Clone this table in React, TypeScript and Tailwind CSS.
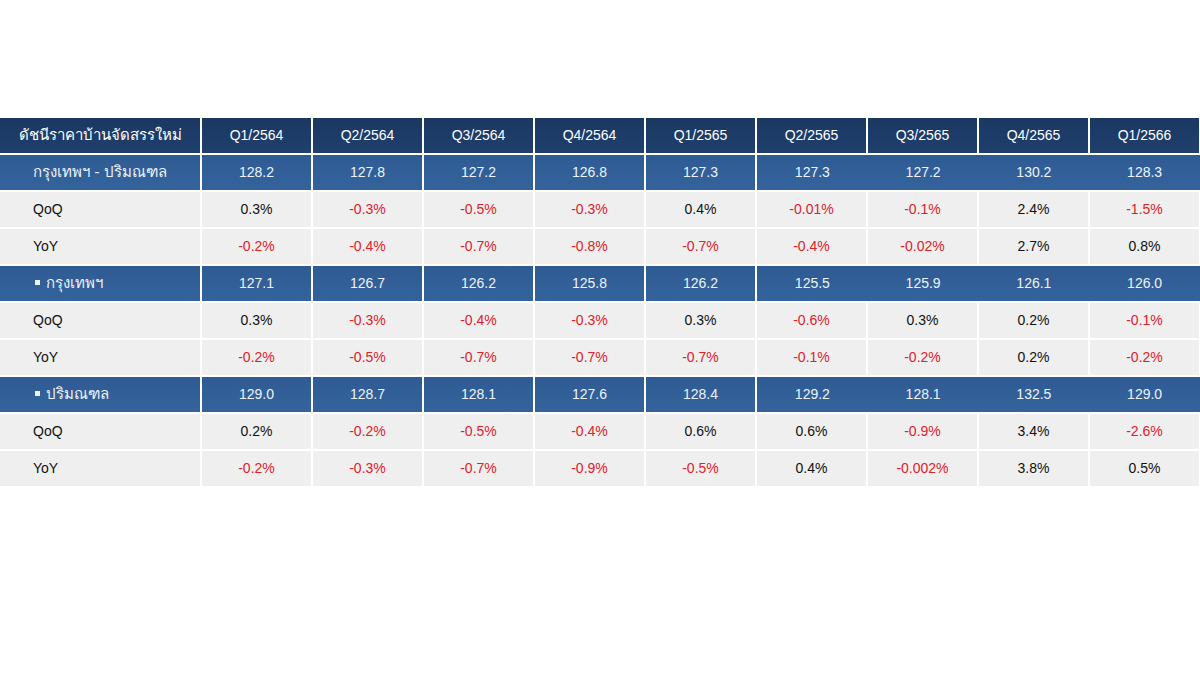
import React from "react"

type Row =
  | { kind: "head"; label: string; bullet?: boolean; values: string[] }
  | { kind: "sub"; label: string; values: string[] }

const QUARTERS = ["Q1/2564", "Q2/2564", "Q3/2564", "Q4/2564", "Q1/2565", "Q2/2565", "Q3/2565", "Q4/2565", "Q1/2566"]

const ROWS: Row[] = [
  { kind: "head", label: "กรุงเทพฯ - ปริมณฑล", values: ["128.2", "127.8", "127.2", "126.8", "127.3", "127.3", "127.2", "130.2", "128.3"] },
  { kind: "sub", label: "QoQ", values: ["0.3%", "-0.3%", "-0.5%", "-0.3%", "0.4%", "-0.01%", "-0.1%", "2.4%", "-1.5%"] },
  { kind: "sub", label: "YoY", values: ["-0.2%", "-0.4%", "-0.7%", "-0.8%", "-0.7%", "-0.4%", "-0.02%", "2.7%", "0.8%"] },
  { kind: "head", label: "กรุงเทพฯ", bullet: true, values: ["127.1", "126.7", "126.2", "125.8", "126.2", "125.5", "125.9", "126.1", "126.0"] },
  { kind: "sub", label: "QoQ", values: ["0.3%", "-0.3%", "-0.4%", "-0.3%", "0.3%", "-0.6%", "0.3%", "0.2%", "-0.1%"] },
  { kind: "sub", label: "YoY", values: ["-0.2%", "-0.5%", "-0.7%", "-0.7%", "-0.7%", "-0.1%", "-0.2%", "0.2%", "-0.2%"] },
  { kind: "head", label: "ปริมณฑล", bullet: true, values: ["129.0", "128.7", "128.1", "127.6", "128.4", "129.2", "128.1", "132.5", "129.0"] },
  { kind: "sub", label: "QoQ", values: ["0.2%", "-0.2%", "-0.5%", "-0.4%", "0.6%", "0.6%", "-0.9%", "3.4%", "-2.6%"] },
  { kind: "sub", label: "YoY", values: ["-0.2%", "-0.3%", "-0.7%", "-0.9%", "-0.5%", "0.4%", "-0.002%", "3.8%", "0.5%"] },
]

const GRID = "grid grid-cols-[200px_repeat(9,109px)] gap-x-[2px] h-[35px]"
const BLUE = "bg-gradient-to-b from-[#2f5b93] to-[#34639c]"

function HeadRow({ row }: { row: Extract<Row, { kind: "head" }> }) {
  return (
    <div className={GRID}>
      <div
        className={
          "flex items-center text-[15px] text-[#eef3f9] " + BLUE + " " +
          (row.bullet ? "pl-[35px]" : "justify-center")
        }
      >
        {row.bullet && <span className="mr-[6px] mb-[3px] inline-block size-[5px] bg-[#eef3f9]" />}
        {row.label}
      </div>
      {row.values.slice(0, 5).map((v, i) => (
        <div key={i} className={"flex items-center justify-center text-[14px] text-[#eef3f9] " + BLUE}>
          {v}
        </div>
      ))}
      {/* right block is one continuous band, no inner gaps */}
      <div className={"col-span-4 grid grid-cols-4 mr-[-1px] " + BLUE}>
        {row.values.slice(5).map((v, i) => (
          <div key={i} className="flex items-center justify-center text-[14px] text-[#eef3f9]">
            {v}
          </div>
        ))}
      </div>
    </div>
  )
}

function SubRow({ row }: { row: Row }) {
  return (
    <div className={GRID}>
      <div className="flex items-center bg-[#efefef] pl-[33px] text-[14px] text-[#111]">{row.label}</div>
      {row.values.map((v, i) => (
        <div
          key={i}
          className={
            "flex items-center justify-center bg-[#efefef] text-[14px] " +
            (v.startsWith("-") ? "text-[#e0212b]" : "text-[#111]")
          }
        >
          {v}
        </div>
      ))}
    </div>
  )
}

export default function App() {
  return (
    <div className="h-[675px] w-[1200px] bg-white pt-[118px] font-['Liberation_Sans',Arial,'Noto_Sans',sans-serif]">
      <div className="flex flex-col gap-y-[2px]">
        <div className={GRID}>
          <div className="flex items-center justify-center bg-gradient-to-b from-[#1b3862] to-[#1f3f6d] text-[15px] text-white">
            ดัชนีราคาบ้านจัดสรรใหม่
          </div>
          {QUARTERS.map((q) => (
            <div key={q} className="flex items-center justify-center bg-gradient-to-b from-[#1b3862] to-[#1f3f6d] text-[14px] text-white">
              {q}
            </div>
          ))}
        </div>
        {ROWS.map((row, i) =>
          row.kind === "head" ? <HeadRow key={i} row={row} /> : <SubRow key={i} row={row} />
        )}
      </div>
    </div>
  )
}
